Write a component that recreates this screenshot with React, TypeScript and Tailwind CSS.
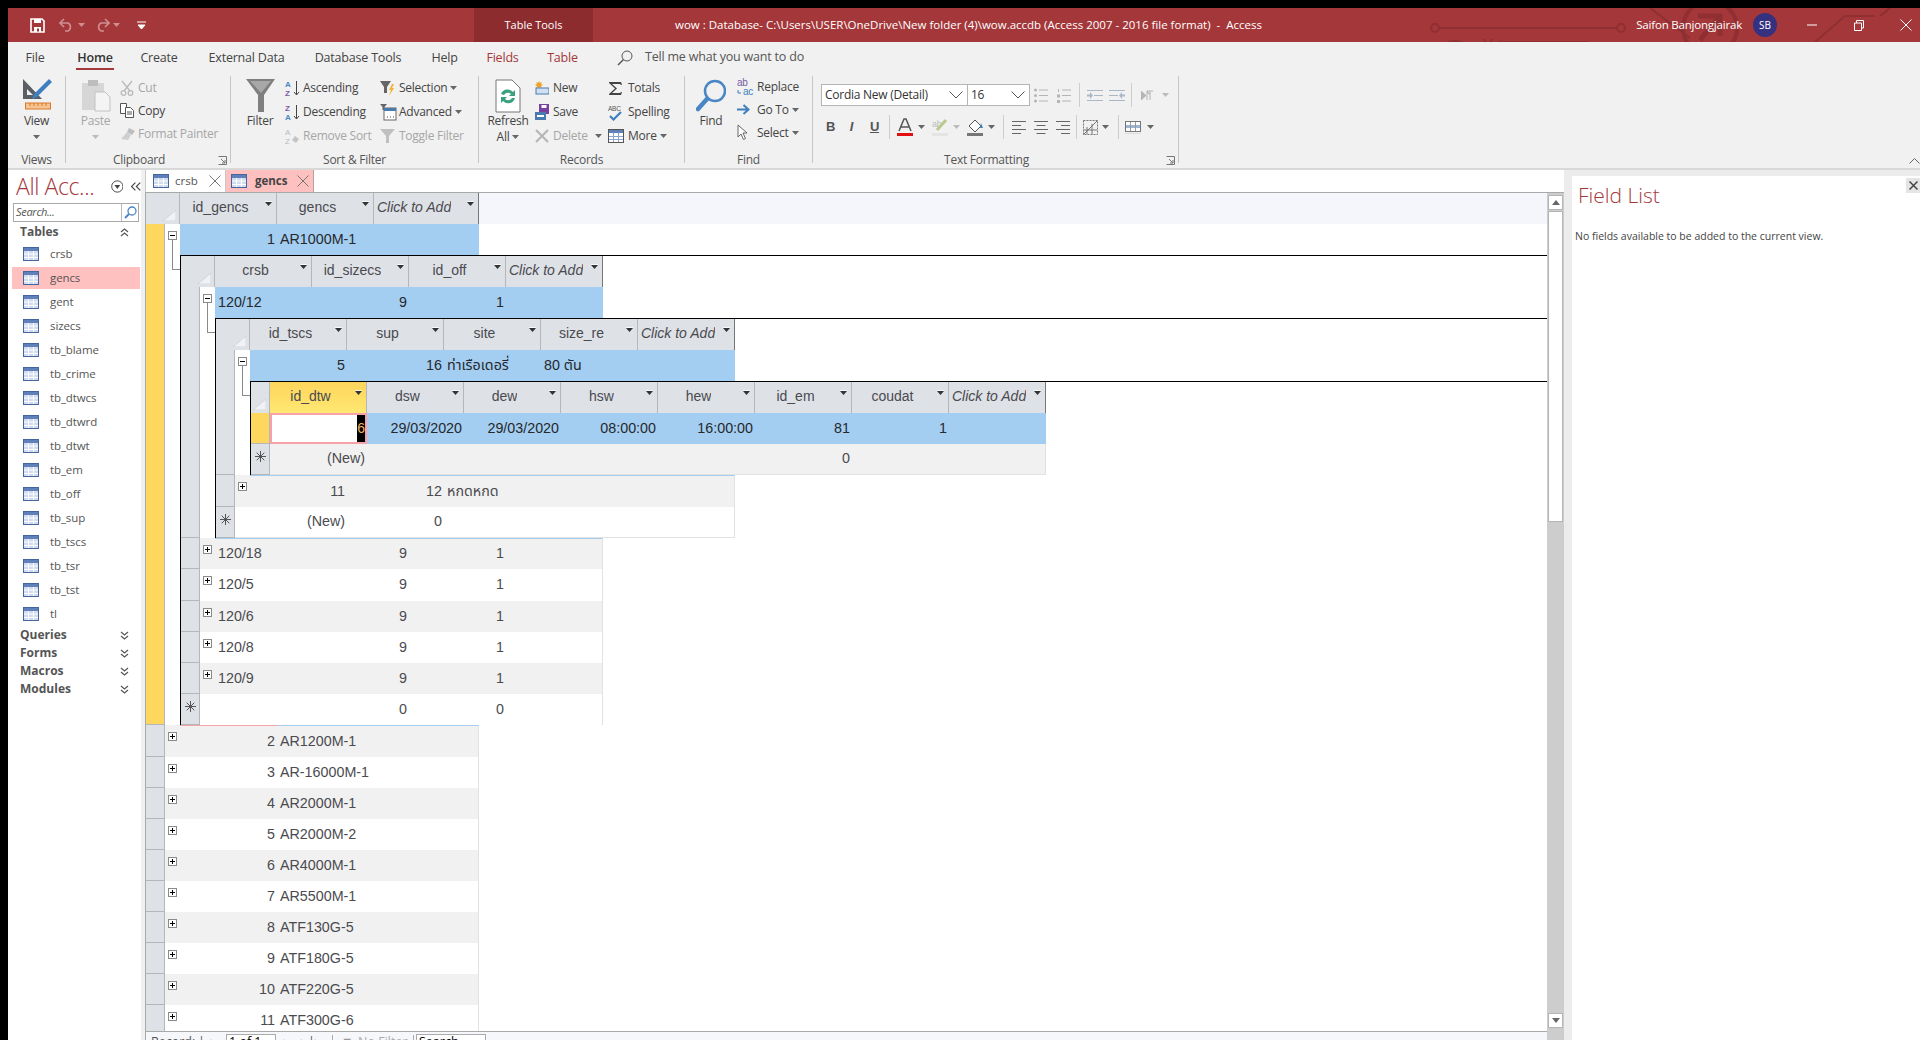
import React from "react";

const UI = "font-['Open_Sans','Noto_Sans',sans-serif]";
const DATA = "font-['Liberation_Sans','Noto_Sans_Thai','Noto_Sans',sans-serif]";
const RH = "h-[31px]";
const RT = "h-[32px]";

const TableIcon = () => (
  <svg width="16" height="14" viewBox="0 0 16 14" className="shrink-0">
    <rect x="0.5" y="0.5" width="15" height="13" fill="#cfdcf0" stroke="#44659d" />
    <rect x="1" y="1" width="14" height="3" fill="#5f80b8" />
    <path d="M1 7h14M1 10.5h14M5.5 4v9M10.5 4v9" stroke="#fff" strokeWidth="1" />
  </svg>
);
const Caret = ({ c = "#666" }: { c?: string }) => (
  <svg width="7" height="4" viewBox="0 0 7 4" className="shrink-0"><path d="M0 0h7L3.5 4z" fill={c} /></svg>
);
const Box = ({ open }: { open?: boolean }) => (
  <svg width="9" height="9" viewBox="0 0 9 9" className="block">
    <rect x="0.5" y="0.5" width="8" height="8" fill="#fff" stroke="#8a8a8a" />
    <path d={open ? "M2 4.5h5" : "M2 4.5h5M4.5 2v5"} stroke="#000" />
  </svg>
);
const Star = () => (
  <svg width="11" height="11" viewBox="0 0 11 11">
    <path d="M5.5 0v11M0 5.5h11M1.7 1.7l7.6 7.6M9.3 1.7l-7.6 7.6" stroke="#555" strokeWidth="1" />
  </svg>
);
const HeadCaret = () => (
  <svg width="7" height="5" viewBox="0 0 7 5" className="absolute right-[4px] top-[8px]">
    <path d="M0 1h7L3.5 5z" fill="#333" />
    <path d="M0 .5h7" stroke="#fff" strokeWidth="0.8" />
  </svg>
);

type C = { t?: React.ReactNode; a?: "l" | "r"; w?: string; raw?: boolean };
const r = (t: React.ReactNode, w?: string): C => ({ t, a: "r", w });
const l = (t: React.ReactNode, w?: string): C => ({ t, a: "l", w });

function Head({ cols, top, narrow, activeFirst }: { cols: string[]; top?: boolean; narrow?: boolean; activeFirst?: boolean }) {
  return (
    <div className={`flex ${RH} ${top ? "bg-[#f5f6fb]" : ""}`}>
      <div className={`relative shrink-0 bg-[#dee1e6] border-r border-[#b3b6bb] ${narrow ? "w-[19px]" : "w-[34px]"}`}>
        <svg width="13" height="11" viewBox="0 0 13 11" className="absolute right-[3px] bottom-[3px]"><path d="M13 0v11H0z" fill="#f0f2f5" stroke="#c4c8ce" strokeWidth="0.6" /></svg>
      </div>
      {cols.map((c, i) => {
        const click = c === "Click to Add";
        const act = activeFirst && i === 0;
        return (
          <div
            key={c}
            className={`relative shrink-0 flex items-center pb-[2px] border-r ${click ? `border-[#777] italic justify-start pl-[3px] ${top ? "w-[105px]" : "w-[97px]"}` : "w-[97px] border-[#b3b6bb] justify-center pr-[15px]"} ${act ? "bg-linear-to-b from-[#fdd55c] to-[#ffe872]" : "bg-[#dee1e6]"} text-[14px] text-[#4a4a50]`}
          >
            <span className={`block whitespace-nowrap overflow-hidden ${click && !top ? "w-[74px]" : ""}`}>{c}</span>
            <HeadCaret />
          </div>
        );
      })}
    </div>
  );
}

function Row({
  cells, bg = "bg-white", active, yellow, star, box, line, pink, connector, noGutter, tall, foot, children,
}: {
  cells: C[]; bg?: string; active?: boolean; yellow?: boolean; star?: boolean; box?: "open" | "plus"; line?: boolean; pink?: boolean; connector?: boolean; noGutter?: boolean; tall?: boolean; foot?: boolean; children?: React.ReactNode;
}) {
  const rowBg = active ? "bg-[#a3cef1]" : bg;
  return (
    <div className="relative flex">
      <div className={`w-[19px] shrink-0 flex justify-center pt-[7px] border-r border-b border-[#b3b6bb] ${yellow ? "bg-[#fdd75e]" : "bg-[#dee1e6]"}`}>
        {star && <Star />}
      </div>
      <div className="flex-1 min-w-0">
        <div className={`flex ${tall ? RT : RH}`}>
          {!noGutter && (
            <div className={`w-[15px] shrink-0 pl-[3px] pt-[7px] ${active ? "bg-white" : bg} ${foot ? "border-b border-b-[#e2e2e2]" : ""}`}>
              {box && <Box open={box === "open"} />}
            </div>
          )}
          {cells.map((c, i) =>
            c.raw ? (
              <div key={i} className="w-[97px] shrink-0">{c.t}</div>
            ) : (
              <div
                key={i}
                className={`shrink-0 flex items-center whitespace-nowrap text-[14.3px] pl-[3px] pr-[2px] ${c.w ?? "w-[97px]"} ${rowBg} ${c.a === "r" ? "justify-end" : "justify-start"} ${active ? "text-[#26282c]" : "text-[#4b4b4f]"} ${line ? (pink && i === 0 ? "border-t border-t-[#f5a3a8]" : "border-t border-t-[#a6cdee]") : ""} ${foot ? "border-b border-b-[#e2e2e2]" : ""} ${i === cells.length - 1 && !active ? "border-r border-r-[#e2e2e2]" : ""}`}
              >
                {c.t}
              </div>
            )
          )}
        </div>
        {children}
      </div>
      {connector && <div className="absolute left-[26px] top-[16px] w-[8px] h-[30px] border-l border-b border-[#8a8a8a]" />}
    </div>
  );
}

const Sub = ({ children }: { children: React.ReactNode }) => (
  <div className="ml-[15px] border-l border-t border-black">{children}</div>
);

const activeCell: C = {
  raw: true,
  t: (
    <div className="h-full border-2 border-[#f5a3a8] bg-white flex justify-end">
      <span className="w-[8px] bg-black text-[#f3b45a] text-[14px] leading-[27px] overflow-hidden text-right">6</span>
    </div>
  ),
};

function Level3() {
  return (
    <Sub>
      <Head narrow activeFirst cols={["id_dtw", "dsw", "dew", "hsw", "hew", "id_em", "coudat", "Click to Add"]} />
      <Row noGutter active yellow cells={[activeCell, r("29/03/2020"), r("29/03/2020"), r("08:00:00"), r("16:00:00"), r("81"), r("1"), l("")]} />
      <Row noGutter star foot bg="bg-[#f1f1f1]" cells={[r("(New)"), l(""), l(""), l(""), l(""), r("0"), l(""), l("")]} />
    </Sub>
  );
}

function Level2() {
  return (
    <Sub>
      <Head cols={["id_tscs", "sup", "site", "size_re", "Click to Add"]} />
      <Row active box="open" connector cells={[r("5"), r("16"), l("ท่าเรือเดอรี่"), l("80 ตัน"), l("")]}>
        <Level3 />
      </Row>
      <Row line tall box="plus" bg="bg-[#f1f1f1]" cells={[r("11"), r("12"), l("หกดหกด"), l(""), l("")]} />
      <Row star foot cells={[r("(New)"), r("0"), l(""), l(""), l("")]} />
    </Sub>
  );
}

function Level1() {
  const rows = ["120/18", "120/5", "120/6", "120/8", "120/9"];
  return (
    <Sub>
      <Head cols={["crsb", "id_sizecs", "id_off", "Click to Add"]} />
      <Row active box="open" connector cells={[l("120/12"), r("9"), r("1"), l("")]}>
        <Level2 />
      </Row>
      {rows.map((n, i) => (
        <Row key={n} line={i === 0} tall={i === 1} box="plus" bg={i % 2 === 0 ? "bg-[#f1f1f1]" : "bg-white"} cells={[l(n), r("9"), r("1"), l("")]} />
      ))}
      <Row star cells={[l(""), r("0"), r("0"), l("")]} />
    </Sub>
  );
}

const mainRows: [number, string][] = [
  [2, "AR1200M-1"], [3, "AR-16000M-1"], [4, "AR2000M-1"], [5, "AR2000M-2"], [6, "AR4000M-1"],
  [7, "AR5500M-1"], [8, "ATF130G-5"], [9, "ATF180G-5"], [10, "ATF220G-5"], [11, "ATF300G-6"],
];

function Datasheet() {
  return (
    <div className={`flex-1 min-w-0 min-h-0 flex flex-col border-l border-[#a9a9a9] ${DATA}`}>
      <div className="flex-1 min-h-0 overflow-hidden">
        <Head top cols={["id_gencs", "gencs", "Click to Add"]} />
        <Row active yellow box="open" connector cells={[r("1"), l("AR1000M-1"), l("", "w-[105px]")]}>
          <Level1 />
        </Row>
        {mainRows.map(([n, s], i) => (
          <Row key={n} line={i === 0} tall={i === 0} pink={i === 0} box="plus" bg={i % 2 === 0 ? "bg-[#f1f1f1]" : "bg-white"} cells={[r(n), l(s), l("", "w-[105px]")]} />
        ))}
      </div>
      <div className={`h-[9px] shrink-0 overflow-hidden border-t border-[#a9a9a9] bg-[#f6f7fb] flex items-start pt-[3px] pl-[5px] text-[12.5px] leading-[14px] text-[#555] ${UI}`}>
        <span className="w-[47px]">Record:</span>
        <span className="w-[20px]">|◂</span>
        <span className="w-[8px] text-[#bbb]">◂</span>
        <span className="w-[50px] h-[16px] border border-[#aaa] bg-white text-black pl-[2px] -mt-[1px]">1 of 1</span>
        <span className="w-[17px] pl-[8px]">▸</span>
        <span className="w-[18px] pl-[8px]">▸|</span>
        <span className="w-[15px] pl-[4px]">▸</span>
        <span className="w-[7px] border-r border-[#aaa] h-[14px]" />
        <span className="w-[25px] pl-[8px] text-[#999]">▼</span>
        <span className="w-[55px] text-[#aaa]">No Filter</span>
        <span className="w-[3px] border-l border-[#aaa] h-[14px]" />
        <span className="w-[70px] h-[16px] border border-[#aaa] bg-white text-black pl-[2px] -mt-[1px]">Search</span>
      </div>
    </div>
  );
}

function Scrollbar() {
  const Btn = ({ up }: { up?: boolean }) => (
    <div className="h-[15px] shrink-0 mx-[1px] bg-white border border-[#b5b5b5] flex items-center justify-center">
      <svg width="8" height="5" viewBox="0 0 8 5">
        <path d={up ? "M4 0l4 5H0z" : "M0 0h8L4 5z"} fill="#666" />
      </svg>
    </div>
  );
  return (
    <div className="w-[17px] shrink-0 bg-[#cdcdcd] flex flex-col pt-[2px] pb-[12px]">
      <Btn up />
      <div className="h-[311px] shrink-0 mx-[1px] mt-[1px] bg-white border border-[#b5b5b5]" />
      <div className="flex-1" />
      <Btn />
    </div>
  );
}

const IcoSave = () => (
  <svg width="15" height="15" viewBox="0 0 15 15"><path d="M1 1h11l2 2v11H1z" fill="none" stroke="#fff" strokeWidth="1.6" /><rect x="4" y="1" width="7" height="4" fill="#fff" /><rect x="4" y="9" width="7" height="5" fill="#fff" /><rect x="7" y="10.5" width="2" height="3" fill="#a4373a" /></svg>
);
const IcoUndo = ({ flip }: { flip?: boolean }) => (
  <svg width="16" height="14" viewBox="0 0 16 14" className={flip ? "-scale-x-100" : ""}><path d="M5 1L1 5l4 4M1 5h8a4.5 4.5 0 010 8H6" fill="none" stroke="#cf8f91" strokeWidth="1.6" /></svg>
);

function TitleBar() {
  return (
    <div className="relative h-[34px] shrink-0 bg-[#a4373a] flex items-center text-white overflow-hidden">
      <svg className="absolute left-[1412px] top-0" width="500" height="34" viewBox="0 0 500 34" fill="none" stroke="#8f2f32" strokeWidth="2">
        <path d="M19 20h178" /><circle cx="15" cy="20" r="4" /><circle cx="201" cy="20" r="4" />
        <circle cx="35" cy="52" r="18" strokeWidth="4" /><path d="M78 34h90M230 0l40 30M64 31a4 4 0 108 0" />
        <circle cx="290" cy="20" r="27" strokeWidth="4" /><path d="M278 8h22v20M300 8l-20 24" strokeWidth="5" />
        <path d="M395 34l30-26h30M460 8l20-16" />
      </svg>
      <div className="relative w-[466px] shrink-0 h-full flex items-center pl-[22px]">
        <IcoSave />
        <span className="ml-[14px]"><IcoUndo /></span>
        <span className="ml-[3px]"><Caret c="#cf8f91" /></span>
        <span className="ml-[9px]"><IcoUndo flip /></span>
        <span className="ml-[3px]"><Caret c="#cf8f91" /></span>
        <svg className="ml-[17px]" width="9" height="8" viewBox="0 0 9 8"><path d="M0 1h9M1 4h7L4.500 8z" stroke="#fff" fill="#fff" strokeWidth="1" /></svg>
      </div>
      <div className={`relative w-[119px] shrink-0 h-full bg-[#8d2c2f] flex items-center justify-center text-[11px] ${UI}`}>Table Tools</div>
      <div className={`relative ml-[82px] whitespace-nowrap text-[11.5px] ${UI}`}>
        wow : Database- C:\Users\USER\OneDrive\New folder (4)\wow.accdb (Access 2007 - 2016 file format) &nbsp;-&nbsp; Access
      </div>
      <div className="flex-1" />
      <div className={`relative whitespace-nowrap text-[11.5px] tracking-[-0.2px] ${UI}`}>Saifon Banjongjairak</div>
      <div className={`relative ml-[11px] w-[24px] h-[24px] rounded-full bg-[#35317f] flex items-center justify-center text-[10px] ${UI}`}>SB</div>
      <svg className="relative ml-[30px]" width="10" height="2" viewBox="0 0 10 2"><path d="M0 1h10" stroke="#fff" /></svg>
      <svg className="relative ml-[37px]" width="10" height="11" viewBox="0 0 10 11"><path d="M.5 3h7v7.500H.5zM2.500 3V.5h7v7.500H7.500" fill="none" stroke="#fff" /></svg>
      <svg className="relative ml-[36px] mr-[8px]" width="12" height="12" viewBox="0 0 12 12"><path d="M.5.5l11 11M11.500.5l-11 11" stroke="#fff" /></svg>
    </div>
  );
}

function Tabs() {
  const T = ({ t, w, red, on }: { t: string; w: string; red?: boolean; on?: boolean }) => (
    <div className={`h-[23px] shrink-0 whitespace-nowrap text-center leading-[21px] border-b-[2px] ${w} ${on ? "border-[#a4373a] font-semibold text-[#333]" : "border-transparent"} ${red ? "text-[#a4373a]" : on ? "" : "text-[#444]"}`}>{t}</div>
  );
  return (
    <div className={`h-[34px] shrink-0 flex items-start pt-[5px] pl-[17px] gap-[28px] text-[12.5px] tracking-[-0.2px] ${UI}`}>
      <T t="File" w="w-[20px] mr-[3px]" />
      <T t="Home" w="w-[38px]" on />
      <T t="Create" w="w-[38px] -ml-[2px] mr-[2px]" />
      <T t="External Data" w="w-[77px]" />
      <T t="Database Tools" w="w-[90px]" />
      <T t="Help" w="w-[27px]" />
      <T t="Fields" w="w-[33px]" red />
      <T t="Table" w="w-[31px]" red />
      <div className="flex items-center h-[21px] ml-[11px] text-[#555]">
        <svg width="16" height="16" viewBox="0 0 16 16" fill="none" stroke="#555" strokeWidth="1"><circle cx="10" cy="6" r="5" /><path d="M6.500 9.500L1 15" strokeWidth="1.500" /></svg>
        <span className="ml-[12px] whitespace-nowrap text-[12.5px]">Tell me what you want to do</span>
      </div>
    </div>
  );
}

const Small = ({ icon, t, off, caret, iw = "w-[18px]", h = "h-[24px]" }: { icon: React.ReactNode; t: string; off?: boolean; caret?: boolean; iw?: string; h?: string }) => (
  <div className={`flex items-center whitespace-nowrap ${h} ${off ? "text-[#a6a6a6]" : "text-[#444]"}`}>
    <span className={`shrink-0 flex items-center ${iw}`}>{icon}</span>
    <span>{t}</span>
    {caret && <span className="ml-[3px]"><Caret /></span>}
  </div>
);

const Big = ({ icon, t, t2, off, caret, w }: { icon: React.ReactNode; t: string; t2?: string; off?: boolean; caret?: boolean; w: string }) => (
  <div className={`shrink-0 flex flex-col items-center ${w} ${off ? "text-[#a6a6a6]" : "text-[#444]"}`}>
    <div className="h-[35px] mt-[2px] flex items-center justify-center">{icon}</div>
    <div className="leading-[16px] mt-[-2px] pt-[2px] whitespace-nowrap">{t}</div>
    {t2 && <div className="flex items-center gap-[3px] leading-[16px]">{t2}<Caret /></div>}
    {caret && <div className="h-[16px] flex items-center"><Caret c={off ? "#bbb" : "#666"} /></div>}
  </div>
);

const Expander = () => (
  <svg width="9" height="9" viewBox="0 0 9 9" fill="none" stroke="#777"><path d="M.5.5h8v8h-8" /><path d="M3 3l4 4M7 4v3H4" /></svg>
);

const Group = ({ w, label, expand, children, cls = "" }: { w: string; label: string; expand?: boolean; children: React.ReactNode; cls?: string }) => (
  <div className={`relative h-[87px] shrink-0 border-r border-[#c6c6c6] flex flex-col ${w}`}>
    <div className={`h-[77px] shrink-0 flex ${cls}`}>{children}</div>
    <div className={`relative h-[14px] leading-[14px] text-center text-[#555] whitespace-nowrap ${expand ? "pr-[18px]" : ""}`}>
      {label}
      {expand && <span className="absolute right-[3px] top-[3px]"><Expander /></span>}
    </div>
  </div>
);

const Grey = "#b9b9b9";
const IViewBig = (
  <svg width="30" height="34" viewBox="0 0 30 34">
    <path d="M1 0l19 20H1zM5 10v6h6z" fill="#5a5f66" fillRule="evenodd" />
    <path d="M27 0l3 3-15 15-5 2 2-5z" fill="#3f7fc0" />
    <rect x="3.500" y="24" width="25" height="6" fill="#f6c491" stroke="#d9782a" />
    <path d="M8 24v3M12 24v3M16 24v3M20 24v3M24 24v3" stroke="#d9782a" />
  </svg>
);
const IPaste = (
  <svg width="30" height="36" viewBox="0 0 30 36">
    <rect x="1" y="5" width="22" height="27" fill="#d6d6d6" />
    <rect x="7" y="2" width="10" height="6" fill="#bdbdbd" />
    <path d="M14 14h10l5 5v14H14z" fill="#f4f4f4" stroke="#c2c2c2" />
  </svg>
);
const IFunnel = (
  <svg width="29" height="35" viewBox="0 0 29 35"><path d="M0 1h29L18 17v17h-6V17z" fill="#7f7f7f" /><path d="M4 3h21L15 15z" fill="#a8a8a8" /></svg>
);
const IRefresh = (
  <svg width="26" height="34" viewBox="0 0 26 34">
    <path d="M1 1h16l8 8v24H1z" fill="#fff" stroke="#777" />
    <path d="M6 15a7 7 0 0112-2l2-2v6h-6l2-2a4.500 4.500 0 00-7 1zM20 19a7 7 0 01-12 3l-2 2v-6h6l-2 2a4.500 4.500 0 007-1z" fill="#3ba17c" />
  </svg>
);
const IFind = (
  <svg width="30" height="33" viewBox="0 0 30 33" fill="none"><circle cx="19" cy="12" r="10" stroke="#4a86c5" strokeWidth="2.500" /><path d="M11 20L2 30" stroke="#4a86c5" strokeWidth="4.500" strokeLinecap="round" /></svg>
);

const I = {
  cut: <svg width="14" height="16" viewBox="0 0 14 16" fill="none" stroke={Grey} strokeWidth="1.300"><path d="M2 1l8 10M12 1L4 11" /><circle cx="3.500" cy="13" r="2.300" /><circle cx="10.500" cy="13" r="2.300" /></svg>,
  copy: <svg width="14" height="15" viewBox="0 0 14 15" fill="#fff" stroke="#555"><path d="M.5.5h6v10h-6z" /><path d="M5.500 4.500h5l3 3v7h-8z" /><path d="M7 9h5M7 11h5" /></svg>,
  painter: <svg width="16" height="14" viewBox="0 0 16 14"><path d="M9 1l6 3-3 4-5-3z" fill="#bdbdbd" /><path d="M7 5l4 3-3 5-7-1z" fill="#cfcfcf" /></svg>,
  asc: <svg width="15" height="18" viewBox="0 0 15 18"><text x="0" y="7.500" fontSize="8" fontFamily="Liberation Sans" fontWeight="700" fill="#4a86c5">A</text><text x="0" y="16.500" fontSize="8" fontFamily="Liberation Sans" fontWeight="700" fill="#7a5aa6">Z</text><path d="M11.500 2v14M9 13l2.500 3 2.500-3" fill="none" stroke="#444" /></svg>,
  desc: <svg width="15" height="18" viewBox="0 0 15 18"><text x="0" y="7.500" fontSize="8" fontFamily="Liberation Sans" fontWeight="700" fill="#7a5aa6">Z</text><text x="0" y="16.500" fontSize="8" fontFamily="Liberation Sans" fontWeight="700" fill="#4a86c5">A</text><path d="M11.500 2v14M9 13l2.500 3 2.500-3" fill="none" stroke="#444" /></svg>,
  rsort: <svg width="15" height="18" viewBox="0 0 15 18"><text x="0" y="7.500" fontSize="8" fontFamily="Liberation Sans" fill="#bbb">A</text><text x="0" y="16.500" fontSize="8" fontFamily="Liberation Sans" fill="#bbb">Z</text><path d="M10 9l4 3-3 4-4-3z" fill="#c4c4c4" /></svg>,
  sel: <svg width="15" height="17" viewBox="0 0 15 17"><path d="M0 1h11L7 7v6H4V7z" fill="#666" /><path d="M12 4L9 10h2l-2 6 5-8h-2l2-4z" fill="#f2b233" /></svg>,
  adv: <svg width="17" height="18" viewBox="0 0 17 18"><path d="M0 1h7L4.500 4v3h-2V4z" fill="#666" /><rect x="4" y="5" width="12" height="12" fill="#fff" stroke="#666" /><rect x="4" y="5" width="12" height="3" fill="#4a7bb0" /><path d="M7 14h1M10 14h1M13 14h1" stroke="#444" /></svg>,
  tf: <svg width="15" height="14" viewBox="0 0 15 14"><path d="M0 0h15L9 7v7H6V7z" fill="#c0c0c0" /></svg>,
  newr: <svg width="14" height="15" viewBox="0 0 14 15"><path d="M4 0l1 2 2-1-1 2 2 1-2 1 1 2-2-1-1 2-1-2-2 1 1-2-2-1 2-1-1-2 2 1z" fill="#f0a028" /><rect x="1" y="7" width="13" height="6" fill="#cfe0f2" stroke="#4a7bb0" /></svg>,
  save: <svg width="14" height="16" viewBox="0 0 14 16"><rect x="4" y="0" width="10" height="10" fill="#7a3fa0" /><rect x="6.500" y="1" width="5" height="3" fill="#fff" /><rect x="0" y="8" width="11" height="8" fill="#4a7bb0" /><rect x="2" y="11" width="7" height="2" fill="#fff" /></svg>,
  del: <svg width="14" height="14" viewBox="0 0 14 14"><path d="M1 1l12 12M13 1L1 13" stroke="#b5b5b5" strokeWidth="2" /></svg>,
  sum: <svg width="15" height="15" viewBox="0 0 15 15"><path d="M1 1h12l1 3h-1l-1-1H4l5 4.500L4 12h8l1-1h1l-1 3H1v-1l6-5.500L1 2z" fill="#444" /></svg>,
  abc: <svg width="15" height="17" viewBox="0 0 15 17"><text x="0" y="6.500" fontSize="6.500" fontFamily="Liberation Sans" fill="#555">ABC</text><path d="M2 12l3.500 3.500L13 8" fill="none" stroke="#3f7fc0" strokeWidth="2.200" /></svg>,
  more: <svg width="16" height="14" viewBox="0 0 16 14"><rect x=".5" y=".5" width="15" height="13" fill="#fff" stroke="#555" /><rect x="1" y="1" width="14" height="3" fill="#5f80b8" /><path d="M1 7.500h14M1 10.500h14M5.500 4v9M10.500 4v9" stroke="#8aa6cf" /></svg>,
  repl: <svg width="17" height="18" viewBox="0 0 17 18"><text x="0" y="8" fontSize="10" fontFamily="Liberation Sans" fill="#7a5aa6">ab</text><text x="6" y="17" fontSize="10" fontFamily="Liberation Sans" fill="#3f7fc0">ac</text><path d="M1 12v3h3" stroke="#3f7fc0" fill="none" /></svg>,
  goto: <svg width="13" height="11" viewBox="0 0 13 11"><path d="M0 5.500h10M6.500 1l5 4.500-5 4.500" fill="none" stroke="#3f7fc0" strokeWidth="2" /></svg>,
  select: <svg width="11" height="17" viewBox="0 0 11 17"><path d="M1 1v12l3-3 2.500 5.500 2-1L6 9h4z" fill="#fff" stroke="#666" /></svg>,
};

const BulletsIcon = (
  <svg width="14" height="15" viewBox="0 0 14 15" fill="#b5b5b5"><circle cx="1.500" cy="2" r="1.500" /><circle cx="1.500" cy="7.500" r="1.500" /><circle cx="1.500" cy="13" r="1.500" /><path d="M5 1.500h9v1H5zM5 7h9v1H5zM5 12.500h9v1H5z" /></svg>
);
const NumIcon = (
  <svg width="14" height="15" viewBox="0 0 14 15" fill="#b5b5b5"><path d="M5 1.500h9v1H5zM5 7h9v1H5zM5 12.500h9v1H5zM1 1h1v3H1zM0 6.500h3v3H0zM0 12h3v3H0z" /></svg>
);
const IndentIcon = ({ out }: { out?: boolean }) => (
  <svg width="16" height="13" viewBox="0 0 16 13" fill="#b5b5b5" className={out ? "-scale-x-100" : ""}><path d="M7 1h9v1H7zM7 6h9v1H7zM7 11h9v1H7zM0 1h16v1H0zM0 11h16v1H0zM0 5.500h3V3l3 3.500L3 10V7.500H0z" fill="#a9b7c6" /></svg>
);
const AlignIcon = ({ k }: { k: "l" | "c" | "r" }) => {
  const d = {
    l: "M0 .5h14M0 4.500h9M0 8.500h14M0 12.500h9",
    c: "M0 .5h14M2.500 4.500h9M0 8.500h14M2.500 12.500h9",
    r: "M0 .5h14M5 4.500h9M0 8.500h14M5 12.500h9",
  }[k];
  return <svg width="14" height="13" viewBox="0 0 14 13"><path d={d} stroke="#666" /></svg>;
};
const VSep = ({ cls }: { cls: string }) => <div className={`w-px h-[24px] bg-[#cdcdcd] shrink-0 ${cls}`} />;

function Ribbon() {
  return (
    <div className={`h-[126px] shrink-0 bg-[#f1f1f1] text-[12px] tracking-[-0.25px] ${UI}`}>
      <Tabs />
      <div className="relative flex">
        <Group w="w-[58px]" label="Views">
          <Big w="w-full" icon={IViewBig} t="View" caret />
        </Group>
        <Group w="w-[165px]" label="Clipboard" expand cls="pl-[12px]">
          <Big w="w-[35px]" off icon={IPaste} t="Paste" caret />
          <div className="ml-[7px]">
            <Small h="h-[23px]" off icon={I.cut} t="Cut" />
            <Small h="h-[23px]" icon={I.copy} t="Copy" />
            <Small h="h-[23px]" off icon={I.painter} t="Format Painter" />
          </div>
        </Group>
        <Group w="w-[248px]" label="Sort & Filter" cls="pl-[13px]">
          <Big w="w-[32px]" icon={IFunnel} t="Filter" />
          <div className="ml-[9px] w-[95px] shrink-0">
            <Small icon={I.asc} t="Ascending" />
            <Small icon={I.desc} t="Descending" />
            <Small off icon={I.rsort} t="Remove Sort" />
          </div>
          <div>
            <Small iw="w-[19px]" icon={I.sel} t="Selection" caret />
            <Small iw="w-[19px]" icon={I.adv} t="Advanced" caret />
            <Small off iw="w-[19px]" icon={I.tf} t="Toggle Filter" />
          </div>
        </Group>
        <Group w="w-[206px]" label="Records" cls="pl-[9px]">
          <Big w="w-[40px]" icon={IRefresh} t="Refresh" t2="All" />
          <div className="ml-[7px] w-[73px] shrink-0">
            <Small icon={I.newr} t="New" />
            <Small icon={I.save} t="Save" />
            <div className="flex items-center">
              <Small off icon={I.del} t="Delete" />
              <span className="ml-[7px]"><Caret /></span>
            </div>
          </div>
          <div>
            <Small iw="w-[20px]" icon={I.sum} t="Totals" />
            <Small iw="w-[20px]" icon={I.abc} t="Spelling" />
            <Small iw="w-[20px]" icon={I.more} t="More" caret />
          </div>
        </Group>
        <Group w="w-[128px]" label="Find" cls="pl-[10px]">
          <Big w="w-[32px]" icon={IFind} t="Find" />
          <div className="ml-[10px] -mt-[1px]">
            <Small h="h-[23px]" iw="w-[20px]" icon={I.repl} t="Replace" />
            <Small h="h-[23px]" iw="w-[20px]" icon={I.goto} t="Go To" caret />
            <Small h="h-[23px]" iw="w-[20px]" icon={I.select} t="Select" caret />
          </div>
        </Group>
        <Group w="w-[366px]" label="Text Formatting" expand cls="pl-[8px] flex-col">
          <div className="flex items-center mt-[8px] h-[22px]">
            <div className="w-[147px] h-[22px] bg-white border border-[#b5b5b5] flex items-center justify-between pl-[3px] pr-[4px] text-[#333] text-[12px]">
              Cordia New (Detail)
              <svg width="14" height="8" viewBox="0 0 14 8" fill="none" stroke="#555"><path d="M.5.5L7 7l6.500-6.500" /></svg>
            </div>
            <div className="w-[62px] h-[22px] bg-white border border-l-0 border-[#b5b5b5] flex items-center justify-between pl-[3px] pr-[4px] text-[#333] text-[12px]">
              16
              <svg width="14" height="8" viewBox="0 0 14 8" fill="none" stroke="#555"><path d="M.5.5L7 7l6.500-6.500" /></svg>
            </div>
            <span className="ml-[4px]">{BulletsIcon}</span>
            <span className="ml-[9px]">{NumIcon}</span>
            <VSep cls="ml-[8px]" />
            <span className="ml-[7px]"><IndentIcon /></span>
            <span className="ml-[6px]"><IndentIcon out /></span>
            <VSep cls="ml-[6px]" />
            <svg className="ml-[9px]" width="13" height="11" viewBox="0 0 13 11" fill="#b5b5b5"><path d="M0 1l5 4.500L0 10zM6 1v9M9 1v9M6 1h6M6 1a3 3 0 003 3" stroke="#b5b5b5" /></svg>
            <span className="ml-[8px]"><Caret c="#bbb" /></span>
          </div>
          <div className="flex items-center mt-[9px] h-[24px] text-[#555]">
            <span className={`w-[15px] ml-[2px] text-center text-[13px] font-bold ${DATA}`}>B</span>
            <span className={`w-[15px] ml-[6px] text-center text-[13px] italic font-bold ${DATA}`}>I</span>
            <span className={`w-[15px] ml-[8px] text-center text-[13px] font-bold underline ${DATA}`}>U</span>
            <VSep cls="ml-[7px]" />
            <svg className="ml-[7px]" width="16" height="18" viewBox="0 0 16 18"><path d="M2 13L7 1h2l5 12M4 9h8" fill="none" stroke="#555" strokeWidth="1.500" /><rect y="15" width="16" height="3" fill="#e21111" /></svg>
            <span className="ml-[5px]"><Caret /></span>
            <svg className="ml-[7px]" width="16" height="18" viewBox="0 0 16 18"><text x="0" y="9" fontSize="9" fontFamily="Liberation Sans" fill="#bbb">ab</text><path d="M5 12L14 2" stroke="#b9c98f" strokeWidth="3" /><rect y="15" width="16" height="3" fill="#e4e4e4" /></svg>
            <span className="ml-[5px]"><Caret c="#bbb" /></span>
            <svg className="ml-[7px]" width="16" height="18" viewBox="0 0 16 18"><path d="M2 8l6-6 6 6-6 6z" fill="#fff" stroke="#555" /><path d="M14 5l2 5h-3z" fill="#3f7fc0" /><rect y="15" width="16" height="3" fill="#777" /></svg>
            <span className="ml-[5px]"><Caret /></span>
            <VSep cls="ml-[8px]" />
            <span className="ml-[8px]"><AlignIcon k="l" /></span>
            <span className="ml-[8px]"><AlignIcon k="c" /></span>
            <span className="ml-[8px]"><AlignIcon k="r" /></span>
            <VSep cls="ml-[6px]" />
            <svg className="ml-[6px]" width="15" height="15" viewBox="0 0 15 15" fill="none" stroke="#777"><path d="M.5.5h14v14H.5z" strokeDasharray="2 1" /><path d="M.5 14.500L14.500.5M4 14V7M9 14V4M1 10h13" /></svg>
            <span className="ml-[4px]"><Caret /></span>
            <VSep cls="ml-[9px]" />
            <svg className="ml-[6px]" width="16" height="13" viewBox="0 0 16 13"><rect x=".5" y=".5" width="15" height="10" fill="#fff" stroke="#777" /><rect x="1" y="4" width="14" height="3" fill="#9db5d3" /><path d="M5.500 1v9M10.500 1v9" stroke="#999" /><path d="M0 12.500h16" stroke="#ddd" /></svg>
            <span className="ml-[6px]"><Caret /></span>
          </div>
        </Group>
        <div className="flex-1 relative">
          <svg className="absolute right-0 top-[82px]" width="11" height="6" viewBox="0 0 11 6" fill="none" stroke="#666"><path d="M.5 5.500L5.500.5l5 5" /></svg>
        </div>
      </div>
    </div>
  );
}

function Nav() {
  const tables = ["crsb", "gencs", "gent", "sizecs", "tb_blame", "tb_crime", "tb_dtwcs", "tb_dtwrd", "tb_dtwt", "tb_em", "tb_off", "tb_sup", "tb_tscs", "tb_tsr", "tb_tst", "tl"];
  const Chev = ({ up }: { up?: boolean }) => (
    <svg width="9" height="9" viewBox="0 0 9 9" fill="none" stroke="#555" strokeWidth="1.200"><path d={up ? "M1 4l3.500-3L8 4M1 8l3.500-3L8 8" : "M1 1l3.500 3L8 1M1 5l3.500 3L8 5"} /></svg>
  );
  const Head2 = ({ t, up, h }: { t: string; up?: boolean; h: string }) => (
    <div className={`flex items-center justify-between pl-[12px] pr-[12px] text-[12px] font-bold text-[#555] ${h}`}>
      {t}
      <Chev up={up} />
    </div>
  );
  return (
    <div className={`w-[133px] shrink-0 bg-white ${UI}`}>
      <div className="h-[33px] flex items-center pl-[8px]">
        <span className="w-[89px] text-[23px] font-light tracking-[-0.4px] text-[#a4373a] whitespace-nowrap">All Acc...</span>
        <svg className="ml-[8px]" width="13" height="13" viewBox="0 0 13 13"><circle cx="6.500" cy="6.500" r="5.800" fill="none" stroke="#444" /><path d="M3.500 5h6l-3 4z" fill="#444" /></svg>
        <svg className="ml-[8px]" width="10" height="9" viewBox="0 0 10 9" fill="none" stroke="#444" strokeWidth="1.200"><path d="M4.500.5l-4 4 4 4M9.500.5l-4 4 4 4" /></svg>
      </div>
      <div className="h-[19px] ml-[5px] w-[126px] border border-[#a9a9a9] flex items-center">
        <span className="flex-1 pl-[2px] italic text-[11px] tracking-[-0.3px] text-[#555]">Search...</span>
        <span className="w-[17px] h-full border-l border-[#bbb] flex items-center justify-center">
          <svg width="13" height="13" viewBox="0 0 13 13" fill="none" stroke="#4a86c5"><circle cx="8" cy="5" r="4" strokeWidth="1.300" /><path d="M5 8l-4 4" strokeWidth="2" /></svg>
        </span>
      </div>
      <Head2 t="Tables" up h="h-[20px]" />
      {tables.map((t) => (
        <div key={t} className="h-[24px] flex items-center">
          <div className={`h-[22px] w-[128px] ml-[4px] flex items-center pl-[11px] text-[11.5px] tracking-[-0.1px] text-[#555] ${t === "gencs" ? "bg-[#ffc0c0] text-[#333]" : ""}`}>
            <TableIcon />
            <span className="ml-[11px]">{t}</span>
          </div>
        </div>
      ))}
      <Head2 t="Queries" h="h-[18px]" />
      <Head2 t="Forms" h="h-[18px]" />
      <Head2 t="Macros" h="h-[18px]" />
      <Head2 t="Modules" h="h-[18px]" />
    </div>
  );
}

function DocTabs() {
  const X = () => (
    <svg width="12" height="12" viewBox="0 0 12 12"><path d="M.5.5l11 11M11.500.5l-11 11" stroke="#777" /></svg>
  );
  return (
    <div className={`h-[23px] shrink-0 flex border-b border-[#a9a9a9] bg-white text-[11.5px] ${UI}`}>
      <div className="w-[81px] pl-[7px] flex items-center border-r border-l border-[#c8c8c8] text-[#555]">
        <TableIcon />
        <span className="ml-[6px]">crsb</span>
        <span className="ml-[11px]"><X /></span>
      </div>
      <div className="w-[88px] pl-[5px] flex items-center bg-[#ffc0c0] border-r border-[#b9a0a0] font-bold text-[#444]">
        <TableIcon />
        <span className="ml-[8px]">gencs</span>
        <span className="ml-[10px]"><X /></span>
      </div>
    </div>
  );
}

function FieldList() {
  return (
    <div className="flex-1 min-w-0 bg-[#ececec] pt-[6px] pl-[8px]">
      <div className={`relative h-full bg-white ${UI}`}>
        <div className="pl-[6px] pt-[5px] text-[21px] font-light leading-[28px] text-[#a4373a]">Field List</div>
        <div className="pl-[3px] mt-[20px] text-[10.5px] leading-[14px] text-[#444]">No fields available to be added to the current view.</div>
        <div className="absolute right-0 top-[2px] w-[14px] h-[15px] bg-[#e5e5e5] flex items-center justify-center">
          <svg width="9" height="9" viewBox="0 0 9 9"><path d="M.5.5l8 8M8.500.5l-8 8" stroke="#444" strokeWidth="1.500" /></svg>
        </div>
      </div>
    </div>
  );
}

export default function App() {
  return (
    <div className="w-[1920px] h-[1040px] overflow-hidden bg-black pt-[8px] pl-[8px] flex flex-col">
      <TitleBar />
      <Ribbon />
      <div className="h-[2px] shrink-0 bg-[#d8d8d8]" />
      <div className="flex-1 min-h-0 flex bg-[#f0f0f0]">
        <Nav />
        <div className="w-[4px] shrink-0" />
        <div className="w-[1419px] shrink-0 flex flex-col min-h-0 bg-white">
          <DocTabs />
          <div className="flex-1 min-h-0 flex">
            <Datasheet />
            <Scrollbar />
          </div>
        </div>
        <FieldList />
      </div>
    </div>
  );
}
